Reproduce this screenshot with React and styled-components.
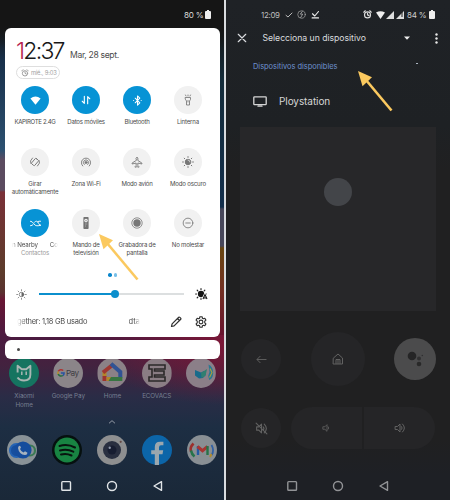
import React from "react";
import styled, { createGlobalStyle } from "styled-components";

const GlobalStyle = createGlobalStyle`
  * { box-sizing: border-box; }
  body { margin: 0; overflow: hidden; background: #202124; font-family: "Inter", "Liberation Sans", sans-serif; }
  svg { display: block; }
`;

const Screens = styled.main`
  position: relative;
  display: grid;
  grid-template-columns: 224px 224px;
  column-gap: 2px;
  width: 450px;
  height: 500px;
  background: #d9dcdf;
`;

const Phone = styled.section`
  display: flex;
  flex-direction: column;
  height: 500px;
  overflow: hidden;
`;

const HomePhone = styled(Phone)`
  background:
    linear-gradient(180deg, #151515 0 24px, transparent 48px),
    radial-gradient(130px 62px at 100% 8px, rgba(140, 22, 52, .75), transparent) 0 335px / 100% 75px no-repeat,
    linear-gradient(180deg, #4c1a40 0, #43223f 30px, #2a2c46 62px, #1d2e43 92px, #1a2838 165px) 0 335px / 100% 165px no-repeat,
    linear-gradient(180deg, #151515 25px, #18304a 60px, #2c5070 150px, #5b4b60 160px, #5b4b60 190px, #7a3038 192px, #5d3c2b 270px, #5a3230 292px, #681634 300px, #4c1a40 335px) 0 0 / 112px 335px no-repeat,
    linear-gradient(180deg, #151515 25px, #152d3b 80px, #132f4c 207px, #47475a 209px, #47475a 246px, #684610 248px, #733023 290px, #68142f 335px) 112px 0 / 112px 335px no-repeat,
    #1a2838;
`;

const RemotePhone = styled(Phone)`
  background: linear-gradient(180deg, #1f2226 0, #1e2124 125px, #202021 170px, #202021 440px, #1e2025 475px);
`;

const StatusBar = styled.header`
  display: flex;
  align-items: center;
  height: 28px;
  padding: ${p => p.$pad};
  color: #dcdcdc;
  flex: none;
`;

const Text = styled.span`
  display: block;
  white-space: nowrap;
  font-size: ${p => p.$size}px;
  font-weight: ${p => p.$weight || 400};
  letter-spacing: ${p => p.$ls || 0}px;
  line-height: ${p => p.$lh || 10}px;
  color: ${p => p.$color || "inherit"};
`;

const Spacer = styled.div`flex: 1;`;

const QuickPanel = styled.section`
  display: flex;
  flex-direction: column;
  flex: none;
  width: 215px;
  height: 309px;
  margin-left: 5px;
  padding: 11px 0 0;
  border-radius: 6px;
  background: #fff;
  color: #4b4b4b;
`;

const ClockRow = styled.div`
  display: flex;
  align-items: flex-end;
  height: 22px;
  padding-left: 11px;
  gap: 6px;
`;

const Clock = styled.time`
  width: 48px;
  white-space: nowrap;
  font-size: 23px;
  font-weight: 300;
  line-height: 19px;
  letter-spacing: -1.75px;
  color: #181818;
  b { font-weight: 300; color: #b51d4d; }
`;

const AlarmChip = styled.div`
  display: flex;
  align-items: center;
  gap: 2px;
  width: 44px;
  height: 13px;
  margin: 5px 0 0 11px;
  padding-left: 4px;
  border: 1px solid #dedede;
  border-radius: 7px;
  color: #a0a0a0;
`;

const TileGrid = styled.div`
  display: grid;
  grid-template-columns: repeat(4, 51px);
  grid-template-rows: 62px 61px 49px;
  margin: 7px 0 0 4.5px;
`;

const Tile = styled.div`
  display: flex;
  flex-direction: column;
  align-items: center;
`;

const TileButton = styled.div`
  display: grid;
  place-items: center;
  width: 28px;
  height: 28px;
  margin-bottom: 4px;
  border-radius: 50%;
  background: ${p => (p.$on ? "#0793d5" : "#f1f1f1")};
  color: ${p => (p.$on ? "#fff" : "#777")};
`;

const NearbyLine = styled.div`
  display: flex;
  justify-content: space-between;
  width: 46px;
  mask-image: linear-gradient(90deg, transparent, #000 5px 40px, transparent);
`;

const Dots = styled.div`
  display: flex;
  justify-content: center;
  gap: 2px;
  height: 4px;
  margin-top: 15px;
`;
const Dot = styled.i`
  width: ${p => p.$d || 3.6}px;
  height: ${p => p.$d || 3.6}px;
  border-radius: 50%;
  background: ${p => p.$color};
`;

const Brightness = styled.div`
  display: flex;
  align-items: center;
  height: 14px;
  margin-top: 10px;
  padding-left: 11px;
`;
const Track = styled.div`
  display: flex;
  align-items: center;
  width: 145px;
  height: 2px;
  margin: 0 11px 0 12px;
  background: linear-gradient(90deg, #0b8fcd 52%, #dcdfe0 52%);
`;
const Thumb = styled.i`
  width: 8px;
  height: 8px;
  margin-left: 72px;
  border-radius: 50%;
  background: #0b8fcd;
`;

const Usage = styled.div`
  display: flex;
  align-items: center;
  height: 14px;
  margin-top: 13.5px;
  padding-left: 12px;
`;
const Fade = styled.div`
  width: ${p => p.$w}px;
  margin-right: ${p => p.$mr}px;
  mask-image: linear-gradient(90deg, ${p => (p.$left ? "transparent, #000 9px" : "#000 50%, transparent")});
`;
const IconSlot = styled.div`margin-right: ${p => p.$mr}px;`;

const Notification = styled.div`
  display: flex;
  align-items: center;
  flex: none;
  width: 215px;
  height: 19px;
  margin: 3px 0 0 5px;
  padding-left: 12px;
  border-radius: 6px;
  background: #fff;
`;

const AppRow = styled.div`
  display: grid;
  grid-template-columns: repeat(5, 44.2px);
  flex: none;
  height: 60px;
  margin-left: 2px;
  margin-top: -1px;
`;
const AppTile = styled.div`
  display: flex;
  flex-direction: column;
  align-items: center;
  color: #777f92;
  & > svg { margin-bottom: 4px; flex: none; clip-path: inset(1px 0 0 0); }
`;
const Caret = styled.div`
  display: flex;
  justify-content: center;
  height: 17px;
`;
const Dock = styled.div`
  display: grid;
  grid-template-columns: repeat(5, 45px);
  justify-items: center;
  height: 30px;
  margin-left: -0.5px;
`;
const NavBar = styled.nav`
  display: grid;
  grid-template-columns: repeat(3, 46px);
  justify-content: center;
  justify-items: center;
  height: 12px;
  color: ${p => p.$color};
  margin-top: ${p => p.$mt}px;
`;

const StatusIcons = styled.div`
  display: flex;
  align-items: center;
  gap: ${p => p.$gap}px;
`;

const TitleBar = styled.div`
  display: flex;
  align-items: center;
  height: 20px;
  padding-left: 10.5px;
  color: #dadcdf;
`;
const SectionHead = styled.div`
  display: flex;
  align-items: flex-start;
  height: 12px;
  margin-top: 13px;
  padding-left: 27px;
`;
const Mark = styled.i`
  width: 2px;
  height: 1px;
  margin: 2px 0 0 79px;
  background: #aab4c0;
`;
const Device = styled.div`
  display: flex;
  align-items: center;
  gap: 12px;
  height: 16px;
  margin-top: 20px;
  padding-left: 27px;
  color: #d5d5d5;
`;
const Touchpad = styled.div`
  display: flex;
  justify-content: center;
  flex: none;
  width: 196px;
  height: 184px;
  margin: 18px 0 0 14px;
  padding-top: 51px;
  background: #272729;
`;
const Pointer = styled.i`
  width: 28px;
  height: 28px;
  border-radius: 50%;
  background: #434549;
`;
const Controls = styled.div`
  display: grid;
  grid-template-columns: 42px 112px 42px;
  justify-items: center;
  align-items: center;
  flex: none;
  width: 196px;
  height: 54px;
  margin: 21px 0 0 14px;
`;
const Round = styled.div`
  display: grid;
  place-items: center;
  width: ${p => p.$d}px;
  height: ${p => p.$d}px;
  border-radius: 50%;
  background: ${p => p.$bg || "#252527"};
  color: #626262;
`;
const VolumeRow = styled.div`
  display: grid;
  grid-template-columns: 48px 71px 71px;
  column-gap: 2px;
  align-items: center;
  height: 42px;
  margin: 21px 0 0 15px;
`;
const VolumeHalf = styled.div`
  display: grid;
  place-items: center;
  height: 42px;
  border-radius: ${p => (p.$left ? "21px 0 0 21px" : "0 21px 21px 0")};
  background: #252527;
  color: #626262;
`;

const ArrowLayer = styled.svg`
  position: absolute;
  left: ${p => p.$x}px;
  top: ${p => p.$y}px;
`;

const Line = ({ w = 12, h = w, box = "0 0 24 24", sw = 2, children }) => (
  <svg width={w} height={h} viewBox={box} fill="none" stroke="currentColor" strokeWidth={sw} strokeLinecap="round" strokeLinejoin="round">{children}</svg>
);

const Battery = () => (
  <svg width="6" height="9" viewBox="0 0 6 9"><path d="M2 0h2v1h1q1 0 1 1v6q0 1-1 1H1Q0 9 0 8V2q0-1 1-1h1z" fill="#eee" /></svg>
);
const Alarm = ({ s = 8 }) => (
  <Line w={s} sw={3}><circle cx="12" cy="13" r="8" /><path d="M12 8v5l4 2M2 6l4-4M22 6l-4-4" /></Line>
);
const rays = (r1, r2) => Array.from({ length: 8 }, (_, i) => {
  const a = (i * Math.PI) / 4;
  return `M${12 + r1 * Math.cos(a)} ${12 + r1 * Math.sin(a)}L${12 + r2 * Math.cos(a)} ${12 + r2 * Math.sin(a)}`;
}).join("");

const glyphs = {
  wifi: <svg width="11" height="9" viewBox="0 0 11 9"><path d="M0.4 2.4Q5.5-1.6 10.6 2.4L5.5 8.8z" fill="currentColor" /></svg>,
  data: <Line w={10} sw={2.7}><path d="M8 3v17M8 20l-5-5M16 21V4M16 4l5 5" /></Line>,
  bluetooth: <Line w={11} sw={2.3}><path d="m7 7 10 10-5 5V2l5 5L7 17M3.5 12h.1M20 12h.1" /></Line>,
  torch: <Line w={12} sw={1.7}><path d="M7 7h10v4l-2 3v8H9v-8l-2-3zM12 13v3M8 4 7 2M12 4V2M16 4l1-2" /></Line>,
  rotate: <Line w={12} sw={1.8}><rect x="8" y="5" width="8" height="14" rx="1.5" transform="rotate(40 12 12)" /><path d="M3.500 15q-3-5 3.500-11M20.500 9q3 5-3.500 11" /></Line>,
  hotspot: <Line w={12} sw={1.8}><circle cx="12" cy="13" r="2" fill="currentColor" /><path d="M8.5 17a5.2 5.2 0 1 1 7 0M5.5 20a9.2 9.2 0 1 1 13 0" /></Line>,
  plane: <Line w={12} sw={1.8}><path d="M10.3 4q1.7-4 3.4 0v5l8 5v2l-8-2v5l2 2v1.5L12 21.3l-3.7 1.2V21l2-2v-5l-8 2v-2l8-5z" /></Line>,
  dark: <Line w={12} sw={2}><circle cx="12" cy="12" r="5.5" fill="currentColor" /><path d={rays(9.2, 10.8)} /><path d="M12 8a4 4 0 0 1 4 4" stroke="#eee" strokeWidth="1.5" /></Line>,
  nearby: <Line w={11} sw={2}><path d="M1 7q4 0 7 5t7 5q4 0 8-1M1 17q4 0 6-3M10 9q2-2 4-2 3 0 5 5t4 4M17 8q2-2 6-1" /></Line>,
  remote: <svg width="6" height="12" viewBox="0 0 6 12"><rect x=".4" width="5.2" height="12" rx=".8" fill="#737373" /><circle cx="3" cy="3.6" r="1.8" fill="#eee" /><circle cx="3" cy="3.6" r=".6" fill="#777" /><path d="M2 7h.5M3.6 7h.5M2 9h.5" stroke="#ddd" /></svg>,
  record: <svg width="12" height="12" viewBox="0 0 12 12"><circle cx="6" cy="6" r="5.2" fill="none" stroke="#777" strokeWidth=".8" /><circle cx="6" cy="6" r="3.7" fill="#777" /></svg>,
  dnd: <Line w={12} sw={1.7}><circle cx="12" cy="12" r="9.7" /><path d="M7.5 12h9" /></Line>,
};

const tiles = [
  { icon: "wifi", on: true, lines: [["KAPIROTE 2.4G", -0.34]] },
  { icon: "data", on: true, lines: [["Datos móviles", -0.22]] },
  { icon: "bluetooth", on: true, lines: [["Bluetooth", -0.26]] },
  { icon: "torch", lines: [["Linterna", -0.19]] },
  { icon: "rotate", lines: [["Girar", -0.15], ["automáticamente", -0.22]] },
  { icon: "hotspot", lines: [["Zona Wi-Fi", -0.24]] },
  { icon: "plane", lines: [["Modo avión", -0.25]] },
  { icon: "dark", lines: [["Modo oscuro", -0.2]] },
  { icon: "nearby", on: true, nearby: true },
  { icon: "remote", lines: [["Mando de", -0.22], ["televisión", -0.16]] },
  { icon: "record", lines: [["Grabadora de", -0.22], ["pantalla", -0.18]] },
  { icon: "dnd", lines: [["No molestar", -0.24]] },
];

const Badge = ({ fill, children }) => (
  <svg width="30" height="30" viewBox="0 0 30 30"><circle cx="15" cy="15" r="15" fill={fill} />{children}</svg>
);

const apps = [
  { names: ["Xiaomi", "Home"], icon: <Badge fill="#157460"><path d="M8.600 14.500V7.800l4.200 3.500h4.400l4.200-3.500v8.700q0 6-6.400 6-4.500 0-6.500-3" fill="none" stroke="#a9b6b3" strokeWidth="1.9" strokeLinejoin="round" /><path d="M12.800 13.500v3.500M17.200 13.500v3.500" stroke="#a9b6b3" strokeWidth="1.5" /></Badge> },
  { names: ["Google Pay"], icon: <Badge fill="#8b8589"><path d="M10.2 12.5a3.3 3.3 0 0 0-5 .9" fill="none" stroke="#ad3432" strokeWidth="1.5" /><path d="M5 13.4v2.8" stroke="#b49027" strokeWidth="1.5" /><path d="M5.1 16.2a3.3 3.3 0 0 0 4.8 1.3" fill="none" stroke="#276f3b" strokeWidth="1.5" /><path d="M7.9 15h3.2q0 2-1.3 2.7" fill="none" stroke="#2852a1" strokeWidth="1.5" /><text x="13" y="18" fontFamily="Inter" fontSize="8.2" fill="#3e3d43" textLength="13">Pay</text></Badge> },
  { names: ["Home"], icon: <Badge fill="#8b8187"><path d="M7.5 18v-4.5" stroke="#b28528" strokeWidth="4" /><path d="M6 14.5 15.5 7" stroke="#a03731" strokeWidth="4" /><path d="m14 5.800 9.300 8.200v6" fill="none" stroke="#315394" strokeWidth="4" /><path d="M5.500 18h4v5h-4z" fill="#9e332d" /><path d="M9.500 19h9v4h-9z" fill="#b28528" /><path d="M14 19h11.300v4H11.500z" fill="#387542" /></Badge> },
  { names: ["ECOVACS"], icon: <Badge fill="#8a7d84"><path d="M7 7h16v4H12.5v2H22v4H12.5v2H23v4H7v-4h3V11H7z" fill="none" stroke="#2b2829" strokeWidth="1.6" /></Badge> },
  { names: [], icon: <Badge fill="#8b7f88"><path d="m9 12 6 2.500 3-1.500 2 3-3 4-4 .5-4-3z" fill="#196b8b" /><path d="m15 15 6-4-1.500 7-4 2z" fill="#317f70" /><path d="M22.500 6.500q4.500 2 4.700 8.500-.2 5.500-4 7l-1-4 1.300-4z" fill="#287895" /><path d="m24 10.500 2 4-2.500 5" fill="none" stroke="#a79c3d" strokeWidth="1.2" /></Badge> },
];

const dock = [
  <Badge fill="#899297"><circle cx="9.5" cy="15.5" r="6.5" fill="#174f9e" stroke="#2463b3" strokeWidth="2" /><circle cx="23" cy="15.5" r="5" fill="none" stroke="#3b7a55" strokeWidth="2.2" /><circle cx="16" cy="15" r="8.6" fill="#164d9d" /><path d="M11.5 11.5q1.5-2 2.5 1l-1 1.5q1 2.500 3.500 3.500l1.500-1.300 2.500 1.500q-.2 2.500-2.500 2.400-6-.4-7-7z" fill="#a7b3bf" /></Badge>,
  <Badge fill="#06100f"><circle cx="15" cy="15" r="12.5" fill="#188442" /><path d="M7.5 11q8-2.500 15.500 1.500M8 15.500q7-2 13.300 1.200M9 19.500q5.500-1.500 10.500 1" stroke="#08150f" strokeWidth="2" fill="none" strokeLinecap="round" /></Badge>,
  <Badge fill="#8e8f90"><circle cx="15" cy="15" r="9" fill="#292f40" /><circle cx="15" cy="15" r="4.5" fill="#171d31" /><circle cx="12.7" cy="12.7" r="1.2" fill="#9099ac" /><circle cx="23.7" cy="6.8" r="1.1" fill="#624945" /></Badge>,
  <Badge fill="#0c65a8"><path d="M12.8 30V19.200H9.200v-3.900h3.600v-3.200q0-5.300 5.300-5.300h3.300v3.500H19q-2 0-2 2.200v2.800h4.200l-.7 3.900H17V30z" fill="#9ba7ae" /></Badge>,
  <Badge fill="#898f94"><path d="M6.500 8.500q-4 4-2.500 8" stroke="#9b302d" strokeWidth="2.6" fill="none" /><path d="M4 15.500q.8 4 3.500 6" stroke="#26734a" strokeWidth="2.6" fill="none" /><path d="M11 20v-9" stroke="#245aa4" strokeWidth="2.4" /><path d="m10.500 11.500 5 4.200 5-4.200" stroke="#a73533" strokeWidth="3" fill="none" /><path d="M20.500 11v9" stroke="#287348" strokeWidth="2.4" /><path d="M24.500 10q3 5 .3 10" stroke="#3161a5" strokeWidth="1.8" fill="none" /><path d="m24.500 19-1.500 3" stroke="#b18c2c" strokeWidth="1.8" /></Badge>,
];

const Navigation = ({ color, mt }) => (
  <NavBar $color={color} $mt={mt}>
    <Line w={12} box="0 0 12 12" sw={1.4}><rect x="1.8" y="1.6" width="8.7" height="8.7" rx=".8" /></Line>
    <Line w={12} box="0 0 12 12" sw={1.4}><circle cx="6" cy="6" r="4.5" /></Line>
    <Line w={12} box="0 0 12 12" sw={1.4}><path d="M9.5 1.7v8.7L2 6z" /></Line>
  </NavBar>
);

const Speaker = ({ waves = 1, muted, s = 10 }) => (
  <Line w={s} sw={2}>
    <path d="M3 9h4l5-5v16l-5-5H3zM15 9q3 3 0 6" />
    {waves > 1 && <path d="M17 4q8 8 0 16" />}
    {muted && <path d="m2 2 20 20" />}
  </Line>
);

const Arrow = ({ x, y, w, h }) => (
  <ArrowLayer $x={x} $y={y} width={w} height={h} viewBox={`0 0 ${w} ${h}`}>
    <path d={`M8 9 ${w - 1.5} ${h - 1.5}`} stroke="#fbc95f" strokeWidth="2.6" />
    <path d="M0 0 14 6.2 4.5 15.2z" fill="#fbc95f" />
  </ArrowLayer>
);

export default function App() {
  return (
    <>
      <GlobalStyle />
      <Screens>
        <HomePhone>
          <StatusBar $pad="1px 13px 0 184px">
            <Text $size={8.1} $ls={-0.25}>80 %</Text><Spacer /><Battery />
          </StatusBar>
          <QuickPanel>
            <ClockRow>
              <Clock><b>1</b>2:37</Clock>
              <Text $size={8.6} $ls={-0.34} $lh={11}>Mar, 28 sept.</Text>
            </ClockRow>
            <AlarmChip><Alarm /><Text $size={5.8} $ls={-0.18}>mié., 9:03</Text></AlarmChip>
            <TileGrid>
              {tiles.map(t => (
                <Tile key={t.icon}>
                  <TileButton $on={t.on}>{glyphs[t.icon]}</TileButton>
                  {t.nearby ? (
                    <>
                      <NearbyLine><Text $size={6.2} $ls={-0.1} $lh={8}>n Nearby</Text><Text $size={6.2} $lh={8}>Co</Text></NearbyLine>
                      <Text $size={6.1} $ls={-0.15} $lh={7.5} $color="#9a9a9a">Contactos</Text>
                    </>
                  ) : t.lines.map(([s, ls]) => <Text key={s} $size={6.1} $ls={ls} $lh={8}>{s}</Text>)}
                </Tile>
              ))}
            </TileGrid>
            <Dots><Dot $color="#0b86cc" /><Dot $color="#76bfe8" /></Dots>
            <Brightness>
              <Line w={11} sw={1.7}><circle cx="12" cy="12" r="5" stroke="#777" /><path d="M12 7a5 5 0 0 1 0 10z" fill="#666" stroke="none" /><path d={rays(8.5, 10.5)} stroke="#777" /></Line>
              <Track><Thumb /></Track>
              <svg width="13" height="12" viewBox="0 0 26 24"><circle cx="12" cy="12" r="6.3" fill="#151515" /><path d={rays(9, 10.7)} stroke="#222" strokeWidth="2.4" strokeLinecap="round" /><path d="m16 22 4-9 4 9M18 20h5" fill="none" stroke="#fff" strokeWidth="5" /><path d="m16 22 4-9 4 9M18 20h5" fill="none" stroke="#151515" strokeWidth="2.2" /></svg>
            </Brightness>
            <Usage>
              <Fade $w={74} $mr={37.5} $left><Text $size={7.5} $ls={-0.28}>gether: 1,18 GB usado</Text></Fade>
              <Fade $w={11} $mr={30}><Text $size={7.5}>dta</Text></Fade>
              <IconSlot $mr={13}><Line w={12} sw={2.4}><path d="M3 21l1.2-5.2L17.5 2.5q1-1 2.2.2l1.6 1.6q1.2 1.2.2 2.2L8.2 19.8zM15 5l4 4" stroke="#303030" /></Line></IconSlot>
              <Line w={12} sw={2.3}><path d="M9.8 1.5h4.4l.7 3 1.7 1 3-1 2.2 3.8-2.3 2.1v3.2l2.3 2.1-2.2 3.8-3-1-1.7 1-.7 3H9.8l-.7-3-1.7-1-3 1-2.2-3.8 2.3-2.1v-3.2L2.2 8.3l2.2-3.8 3 1 1.7-1z" stroke="#303030" /><circle cx="12" cy="12" r="3.8" stroke="#303030" /></Line>
            </Usage>
          </QuickPanel>
          <Notification><Dot $d={3} $color="#494949" /></Notification>
          <AppRow>
            {apps.map((a, i) => (
              <AppTile key={i}>{a.icon}{a.names.map(n => <Text key={n} $size={6.3} $lh={8.5} $ls={-0.1}>{n}</Text>)}</AppTile>
            ))}
          </AppRow>
          <Caret><Line w={8} sw={3}><path d="m4 15 8-7 8 7" stroke="#929aa5" /></Line></Caret>
          <Dock>{dock.map((d, i) => <React.Fragment key={i}>{d}</React.Fragment>)}</Dock>
          <Navigation color="#e0e4e7" mt={15} />
        </HomePhone>
        <RemotePhone>
          <StatusBar $pad="1px 15px 0 35px">
            <IconSlot $mr={5}><Text $size={7.9} $ls={-0.3} $color="#bdbdbd">12:09</Text></IconSlot>
            <StatusIcons $gap={4.5}>
              <Line w={8} sw={3}><path d="m3 13 6 5L21 6" stroke="#bbb" /></Line>
              <Line w={9} sw={1.8}><circle cx="12" cy="12" r="10" stroke="#aaa" /><path d="m14 4-5 7h6l-5 9" stroke="#ccc" /></Line>
              <Line w={9} sw={3}><path d="m4 10 6 6L20 4M3 21h17" stroke="#eee" /></Line>
            </StatusIcons>
            <Spacer />
            <StatusIcons $gap={2.5}>
              <Alarm s={9} />
              <svg width="30" height="8" viewBox="0 0 30 8"><path d="M1 1.6Q5.5-1 10 1.6L5.5 8z" fill="#eee" /><path d="M19 0v8h-8z" fill="#ddd" /><path d="M29 0v8h-8z" fill="#ddd" /><path d="M27 1v5" stroke="#222" /></svg>
              <Text $size={8} $ls={-0.2} $color="#d0d0d0">84 %</Text>
              <Battery />
            </StatusIcons>
          </StatusBar>
          <TitleBar>
            <IconSlot $mr={16}><Line w={10} sw={2.8}><path d="m3 3 18 18M21 3 3 21" /></Line></IconSlot>
            <Text $size={8.7} $ls={-0.04}>Selecciona un dispositivo</Text>
            <Spacer />
            <IconSlot $mr={25}><svg width="6" height="4" viewBox="0 0 6 4"><path d="M0 .5h6L3 3.8z" fill="#eee" /></svg></IconSlot>
            <IconSlot $mr={12}><svg width="3" height="11" viewBox="0 0 3 11"><g fill="#e8e8e8"><circle cx="1.5" cy="1.5" r="1.2" /><circle cx="1.5" cy="5.5" r="1.2" /><circle cx="1.5" cy="9.5" r="1.2" /></g></svg></IconSlot>
          </TitleBar>
          <SectionHead><Text $size={7.5} $ls={-0.04} $lh={12} $color="#6e91ce">Dispositivos disponibles</Text><Mark /></SectionHead>
          <Device>
            <Line w={14} h={11} box="0 0 14 11" sw={1.3}><path d="M1.5 .8h11q.7 0 .7.7v6.5q0 .7-.7.7h-11q-.7 0-.7-.7V1.5q0-.7.7-.7zM5 10.2h4" /></Line>
            <Text $size={10} $ls={-0.08} $lh={14}>Ploystation</Text>
          </Device>
          <Touchpad><Pointer /></Touchpad>
          <Controls>
            <Round $d={40}><Line w={11} sw={2}><path d="M22 12H3M9 5l-7 7 7 7" /></Line></Round>
            <Round $d={54}><Line w={12} sw={2}><path d="M3 10 12 2l9 8v12H3zM8 21v-8h8v8M12 13v8" /></Line></Round>
            <Round $d={42} $bg="#4b4b4c"><svg width="18" height="18" viewBox="0 0 18 18"><circle cx="6" cy="6" r="4.3" fill="#252526" /><circle cx="13" cy="8.5" r="2" fill="#303031" /><circle cx="13" cy="14" r="2.3" fill="#292929" /><circle cx="16.3" cy="5.5" r=".8" fill="#303031" /></svg></Round>
          </Controls>
          <VolumeRow>
            <Round $d={40}><Speaker muted waves={2} s={13} /></Round>
            <VolumeHalf $left><Speaker /></VolumeHalf>
            <VolumeHalf><Speaker waves={2} s={12} /></VolumeHalf>
          </VolumeRow>
          <Navigation color="#929396" mt={31} />
        </RemotePhone>
        <Arrow x={99} y={234} w={40} h={47} />
        <Arrow x={358} y={71} w={35} h={41} />
      </Screens>
    </>
  );
}
